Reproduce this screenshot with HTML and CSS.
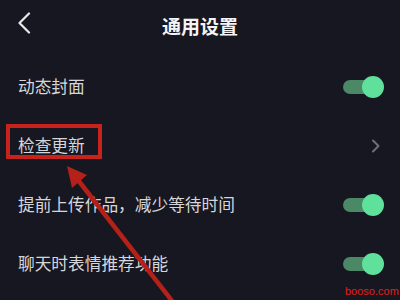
FILE: index.html
```html
<!DOCTYPE html>
<html lang="zh">
<head>
<meta charset="utf-8">
<link rel="stylesheet" href="styles.css">
</head>
<body>
<div class="page">
  <header class="header">
    <svg class="back" width="16" height="22" viewBox="0 0 16 22"><path d="M13 1.5 L3.5 11 L13 20.5" fill="none" stroke="#e8e8ea" stroke-width="2.2" stroke-linecap="round" stroke-linejoin="round"/></svg>
    <div class="title">通用设置</div>
  </header>
  <div class="list">
    <div class="row"><span class="label">动态封面</span><div class="toggle"><div class="track"></div><div class="knob"></div></div></div>
    <div class="row"><span class="label">检查更新</span><svg class="chev" width="10" height="14" viewBox="0 0 10 14"><path d="M2 1.5 L7.5 7 L2 12.5" fill="none" stroke="#6e6f78" stroke-width="2" stroke-linecap="round" stroke-linejoin="round"/></svg></div>
    <div class="row"><span class="label">提前上传作品，减少等待时间</span><div class="toggle"><div class="track"></div><div class="knob"></div></div></div>
    <div class="row"><span class="label">聊天时表情推荐功能</span><div class="toggle"><div class="track"></div><div class="knob"></div></div></div>
  </div>
  <div class="redbox"></div>
  <svg class="arrow" width="400" height="300" viewBox="0 0 400 300">
    <line x1="78" y1="180" x2="176" y2="306" stroke="#b52019" stroke-width="4.5"/>
    <polygon points="67,166 87,175 72,188" fill="#b52019"/>
  </svg>
  <div class="mark">booso.com</div>
</div>
</body>
</html>
```
FILE: styles.css
```css
html, body {
  margin: 0;
  padding: 0;
  background: #161720;
}
.page {
  position: relative;
  width: 400px;
  height: 300px;
  overflow: hidden;
  background: #161720;
  font-family: "Noto Sans CJK SC", "Noto Sans", sans-serif;
}
.header {
  position: relative;
  height: 50px;
  display: flex;
  align-items: center;
  justify-content: center;
}
.back {
  position: absolute;
  left: 16px;
  top: 12px;
}
.title {
  color: #f4f4f6;
  font-size: 19px;
  font-weight: 700;
  line-height: 1;
}
.list {
  padding-top: 7px;
}
.row {
  height: 59px;
  display: flex;
  align-items: center;
  justify-content: space-between;
  padding: 0 16px 0 18px;
}
.label {
  color: #d6d6da;
  font-size: 16.7px;
  line-height: 1;
}
.toggle {
  position: relative;
  width: 41px;
  height: 22px;
}
.track {
  position: absolute;
  left: 0;
  top: 4px;
  width: 36px;
  height: 14px;
  border-radius: 7px;
  background: #4b8866;
}
.knob {
  position: absolute;
  right: 0;
  top: 0;
  width: 22px;
  height: 22px;
  border-radius: 50%;
  background: #5fe09b;
}
.chev {
  margin-right: 3px;
}
.redbox {
  position: absolute;
  left: 6px;
  top: 124px;
  width: 88px;
  height: 27px;
  border: 4px solid #c8221c;
}
.arrow {
  position: absolute;
  left: 0;
  top: 0;
}
.mark {
  position: absolute;
  left: 345px;
  top: 285px;
  color: #e0201e;
  font-family: "Liberation Sans", sans-serif;
  font-size: 11px;
  line-height: 13px;
  white-space: nowrap;
}
```
